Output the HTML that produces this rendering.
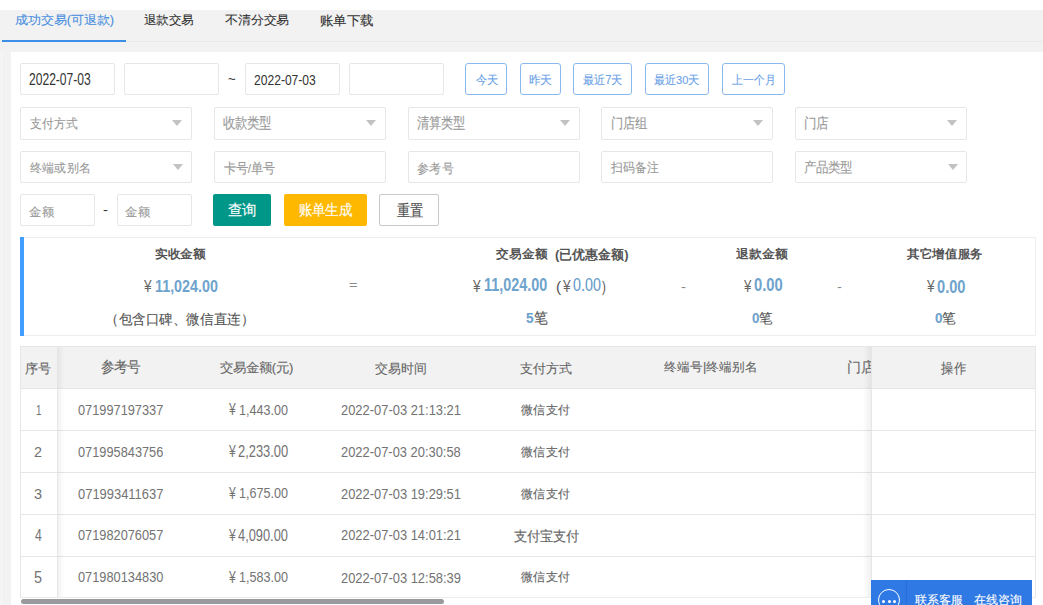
<!DOCTYPE html><html><head><meta charset="utf-8"><style>html,body{margin:0;padding:0;width:1043px;height:605px;overflow:hidden;background:#fff;font-family:"Liberation Sans", sans-serif}.t{position:absolute;white-space:nowrap;transform-origin:0 0;line-height:1;-webkit-text-stroke:0.12px}.b{-webkit-text-stroke:0}</style></head><body>
<div style="position:absolute;left:0px;top:0px;width:1043px;height:10px;background:#fff"></div>
<div style="position:absolute;left:0px;top:10px;width:1043px;height:31px;background:#f2f2f2"></div>
<div style="position:absolute;left:0px;top:41px;width:1043px;height:1px;background:#e8e8e8"></div>
<div style="position:absolute;left:0px;top:42px;width:1043px;height:10px;background:#f2f2f2"></div>
<div style="position:absolute;left:2px;top:40px;width:124px;height:2px;background:#3d8ee6"></div>
<div style="position:absolute;left:0px;top:52px;width:11px;height:553px;background:#f2f2f2"></div>
<div style="position:absolute;left:1px;top:52px;width:1px;height:553px;background:#f8f8f8"></div>
<div style="position:absolute;left:11px;top:52px;width:1032px;height:553px;background:#fff"></div>
<div style="position:absolute;left:20px;top:63px;width:95px;height:32px;box-sizing:border-box;border:1px solid #e6e6e6;border-radius:2px;background:#fff"></div>
<div style="position:absolute;left:124px;top:63px;width:95px;height:32px;box-sizing:border-box;border:1px solid #e6e6e6;border-radius:2px;background:#fff"></div>
<div style="position:absolute;left:245px;top:63px;width:95px;height:32px;box-sizing:border-box;border:1px solid #e6e6e6;border-radius:2px;background:#fff"></div>
<div style="position:absolute;left:349px;top:63px;width:95px;height:32px;box-sizing:border-box;border:1px solid #e6e6e6;border-radius:2px;background:#fff"></div>
<div style="position:absolute;left:465px;top:63px;width:42px;height:32px;box-sizing:border-box;border:1px solid #8ab9ee;border-radius:3px;background:#fff"></div>
<div style="position:absolute;left:520px;top:63px;width:41px;height:32px;box-sizing:border-box;border:1px solid #8ab9ee;border-radius:3px;background:#fff"></div>
<div style="position:absolute;left:573px;top:63px;width:59px;height:32px;box-sizing:border-box;border:1px solid #8ab9ee;border-radius:3px;background:#fff"></div>
<div style="position:absolute;left:645px;top:63px;width:64px;height:32px;box-sizing:border-box;border:1px solid #8ab9ee;border-radius:3px;background:#fff"></div>
<div style="position:absolute;left:722px;top:63px;width:63px;height:32px;box-sizing:border-box;border:1px solid #8ab9ee;border-radius:3px;background:#fff"></div>
<div style="position:absolute;left:20px;top:106.5px;width:172px;height:33px;box-sizing:border-box;border:1px solid #e6e6e6;border-radius:2px;background:#fff"></div>
<div style="position:absolute;left:172px;top:120px;width:0;height:0;border-left:5px solid transparent;border-right:5px solid transparent;border-top:6px solid #c2c2c2"></div>
<div style="position:absolute;left:214px;top:106.5px;width:172px;height:33px;box-sizing:border-box;border:1px solid #e6e6e6;border-radius:2px;background:#fff"></div>
<div style="position:absolute;left:366px;top:120px;width:0;height:0;border-left:5px solid transparent;border-right:5px solid transparent;border-top:6px solid #c2c2c2"></div>
<div style="position:absolute;left:408px;top:106.5px;width:172px;height:33px;box-sizing:border-box;border:1px solid #e6e6e6;border-radius:2px;background:#fff"></div>
<div style="position:absolute;left:560px;top:120px;width:0;height:0;border-left:5px solid transparent;border-right:5px solid transparent;border-top:6px solid #c2c2c2"></div>
<div style="position:absolute;left:601px;top:106.5px;width:172px;height:33px;box-sizing:border-box;border:1px solid #e6e6e6;border-radius:2px;background:#fff"></div>
<div style="position:absolute;left:753px;top:120px;width:0;height:0;border-left:5px solid transparent;border-right:5px solid transparent;border-top:6px solid #c2c2c2"></div>
<div style="position:absolute;left:795px;top:106.5px;width:172px;height:33px;box-sizing:border-box;border:1px solid #e6e6e6;border-radius:2px;background:#fff"></div>
<div style="position:absolute;left:947px;top:120px;width:0;height:0;border-left:5px solid transparent;border-right:5px solid transparent;border-top:6px solid #c2c2c2"></div>
<div style="position:absolute;left:20px;top:151px;width:172px;height:32px;box-sizing:border-box;border:1px solid #e6e6e6;border-radius:2px;background:#fff"></div>
<div style="position:absolute;left:173px;top:164px;width:0;height:0;border-left:5px solid transparent;border-right:5px solid transparent;border-top:6px solid #c2c2c2"></div>
<div style="position:absolute;left:214px;top:151px;width:172px;height:32px;box-sizing:border-box;border:1px solid #e6e6e6;border-radius:2px;background:#fff"></div>
<div style="position:absolute;left:408px;top:151px;width:172px;height:32px;box-sizing:border-box;border:1px solid #e6e6e6;border-radius:2px;background:#fff"></div>
<div style="position:absolute;left:601px;top:151px;width:172px;height:32px;box-sizing:border-box;border:1px solid #e6e6e6;border-radius:2px;background:#fff"></div>
<div style="position:absolute;left:795px;top:151px;width:172px;height:32px;box-sizing:border-box;border:1px solid #e6e6e6;border-radius:2px;background:#fff"></div>
<div style="position:absolute;left:948px;top:164px;width:0;height:0;border-left:5px solid transparent;border-right:5px solid transparent;border-top:6px solid #c2c2c2"></div>
<div style="position:absolute;left:20px;top:194px;width:75px;height:32px;box-sizing:border-box;border:1px solid #e6e6e6;border-radius:2px;background:#fff"></div>
<div style="position:absolute;left:117px;top:194px;width:75px;height:32px;box-sizing:border-box;border:1px solid #e6e6e6;border-radius:2px;background:#fff"></div>
<div style="position:absolute;left:213px;top:194px;width:58px;height:32px;background:#009688;border-radius:2px"></div>
<div style="position:absolute;left:284px;top:194px;width:83px;height:32px;background:#ffb800;border-radius:2px"></div>
<div style="position:absolute;left:379px;top:194px;width:60px;height:32px;box-sizing:border-box;border:1px solid #c9c9c9;border-radius:2px;background:#fff"></div>
<div style="position:absolute;left:20px;top:237px;width:1016px;height:99px;box-sizing:border-box;border:1px solid #eeeeee;background:#fff"></div>
<div style="position:absolute;left:20px;top:237px;width:4px;height:99px;background:#409eff"></div>
<div style="position:absolute;left:20px;top:346px;width:1016px;height:253px;box-sizing:border-box;border:1px solid #e6e6e6;background:#fff"></div>
<div style="position:absolute;left:21px;top:347px;width:1014px;height:42px;background:#f2f2f2"></div>
<div style="position:absolute;left:21px;top:388px;width:1014px;height:1px;background:#e6e6e6"></div>
<div style="position:absolute;left:21px;top:430px;width:1014px;height:1px;background:#e6e6e6"></div>
<div style="position:absolute;left:21px;top:472px;width:1014px;height:1px;background:#e6e6e6"></div>
<div style="position:absolute;left:21px;top:514px;width:1014px;height:1px;background:#e6e6e6"></div>
<div style="position:absolute;left:21px;top:556px;width:1014px;height:1px;background:#e6e6e6"></div>
<div style="position:absolute;left:57px;top:347px;width:1px;height:252px;background:#e6e6e6"></div>
<div style="position:absolute;left:58px;top:347px;width:6px;height:252px;background:linear-gradient(to right,rgba(0,0,0,0.05),rgba(0,0,0,0))"></div>
<div style="position:absolute;left:863px;top:347px;width:8px;height:252px;background:linear-gradient(to left,rgba(0,0,0,0.06),rgba(0,0,0,0))"></div>
<div style="position:absolute;left:871px;top:347px;width:1px;height:252px;background:#e6e6e6"></div>
<div style="position:absolute;left:1035px;top:346px;width:1px;height:253px;background:#e6e6e6"></div>
<div style="position:absolute;left:20px;top:597px;width:1016px;height:8px;background:#fff"></div>
<div style="position:absolute;left:20px;top:597px;width:1016px;height:1px;background:#ececec"></div>
<div style="position:absolute;left:21px;top:598.5px;width:423px;height:5.5px;background:#9a9a9e;border-radius:2.5px"></div>
<div style="position:absolute;left:871px;top:580px;width:161px;height:25px;background:#2f79e4"></div>
<div style="position:absolute;left:906px;top:580px;width:1px;height:25px;background:#296ed8"></div>
<div style="position:absolute;left:878px;top:589px;width:22px;height:22px;box-sizing:border-box;border:1.8px solid #fff;border-radius:50%"></div>
<div style="position:absolute;left:882px;top:599.6px;width:3px;height:3px;background:#fff;border-radius:50%"></div>
<div style="position:absolute;left:887.5px;top:599.6px;width:3px;height:3px;background:#fff;border-radius:50%"></div>
<div style="position:absolute;left:893px;top:599.6px;width:3px;height:3px;background:#fff;border-radius:50%"></div>
<div style="position:absolute;left:0;top:0;width:871px;height:605px;overflow:hidden;pointer-events:none"><div style="position:absolute;left:847px;top:359.2px;font-size:14px;color:#666;white-space:nowrap;line-height:16px;-webkit-text-stroke:0.12px">门店</div></div>
<div class="t" style="left:14.73px;top:13.68px;font-size:13px;color:#4a8fe0;font-weight:normal;transform:scale(0.9929,0.9114)">成功交易(可退款)</div>
<div class="t" style="left:144.33px;top:13.61px;font-size:13px;color:#333;font-weight:normal;transform:scale(0.9588,0.9095)">退款交易</div>
<div class="t" style="left:225.00px;top:13.61px;font-size:13px;color:#333;font-weight:normal;transform:scale(0.9875,0.9095)">不清分交易</div>
<div class="t" style="left:319.84px;top:13.60px;font-size:13px;color:#333;font-weight:normal;transform:scale(1.0223,0.9860)">账单下载</div>
<div class="t b" style="left:29.10px;top:71.39px;font-size:14px;color:#333;font-weight:normal;transform:scale(0.8619,1.1326)">2022-07-03</div>
<div class="t b" style="left:228.14px;top:72.41px;font-size:14px;color:#333;font-weight:normal;transform:scale(0.9306,1.0000)">~</div>
<div class="t b" style="left:253.64px;top:71.91px;font-size:14px;color:#333;font-weight:normal;transform:scale(0.8631,1.1094)">2022-07-03</div>
<div class="t" style="left:475.54px;top:74.26px;font-size:12px;color:#6a9fe6;font-weight:normal;transform:scale(0.9130,0.9784)">今天</div>
<div class="t" style="left:529.18px;top:74.28px;font-size:12px;color:#6a9fe6;font-weight:normal;transform:scale(0.9508,0.9748)">昨天</div>
<div class="t" style="left:583.08px;top:74.21px;font-size:12px;color:#6a9fe6;font-weight:normal;transform:scale(0.9226,0.9873)">最近7天</div>
<div class="t" style="left:654.48px;top:74.45px;font-size:12px;color:#6a9fe6;font-weight:normal;transform:scale(0.9178,0.9812)">最近30天</div>
<div class="t" style="left:732.00px;top:73.67px;font-size:12px;color:#6a9fe6;font-weight:normal;transform:scale(0.9284,1.0338)">上一个月</div>
<div class="t" style="left:30.01px;top:116.62px;font-size:13px;color:#999;font-weight:normal;transform:scale(0.9238,1.0263)">支付方式</div>
<div class="t" style="left:223.40px;top:115.90px;font-size:13px;color:#999;font-weight:normal;transform:scale(0.9296,1.1227)">收款类型</div>
<div class="t" style="left:416.74px;top:116.47px;font-size:13px;color:#999;font-weight:normal;transform:scale(0.9125,1.1198)">清算类型</div>
<div class="t" style="left:610.77px;top:116.33px;font-size:13px;color:#999;font-weight:normal;transform:scale(0.9258,1.0542)">门店组</div>
<div class="t" style="left:803.59px;top:116.56px;font-size:13px;color:#999;font-weight:normal;transform:scale(0.9373,1.0446)">门店</div>
<div class="t" style="left:29.56px;top:161.81px;font-size:13px;color:#999;font-weight:normal;transform:scale(0.9414,0.9475)">终端或别名</div>
<div class="t" style="left:223.66px;top:161.59px;font-size:13px;color:#999;font-weight:normal;transform:scale(0.9089,1.0408)">卡号/单号</div>
<div class="t" style="left:417.25px;top:161.70px;font-size:13px;color:#999;font-weight:normal;transform:scale(0.9484,1.0240)">参考号</div>
<div class="t" style="left:611.32px;top:161.25px;font-size:13px;color:#999;font-weight:normal;transform:scale(0.9179,1.0045)">扫码备注</div>
<div class="t" style="left:804.23px;top:161.41px;font-size:13px;color:#999;font-weight:normal;transform:scale(0.9259,1.0401)">产品类型</div>
<div class="t" style="left:28.72px;top:204.67px;font-size:13px;color:#999;font-weight:normal;transform:scale(0.9799,0.9571)">金额</div>
<div class="t b" style="left:103.18px;top:203.41px;font-size:13px;color:#333;font-weight:normal;transform:scale(1.1363,1.0000)">-</div>
<div class="t" style="left:125.45px;top:204.67px;font-size:13px;color:#999;font-weight:normal;transform:scale(0.9801,0.9571)">金额</div>
<div class="t" style="left:228.37px;top:202.73px;font-size:13px;color:#fff;font-weight:normal;transform:scale(1.0816,1.1258)">查询</div>
<div class="t" style="left:298.73px;top:202.97px;font-size:13px;color:#fff;font-weight:normal;transform:scale(1.0150,1.1313)">账单生成</div>
<div class="t" style="left:396.94px;top:203.23px;font-size:13px;color:#505050;font-weight:normal;transform:scale(0.9875,1.2008)">重置</div>
<div class="t b" style="left:154.54px;top:248.33px;font-size:13px;color:#555;font-weight:bold;transform:scale(0.9644,0.9089)">实收金额</div>
<div class="t b" style="left:144.43px;top:276.97px;font-size:14px;color:#666;font-weight:normal;transform:scale(0.9750,1.2358)">¥</div>
<div class="t b" style="left:154.65px;top:277.77px;font-size:16px;color:#6ea3cc;font-weight:bold;transform:scale(0.8944,1.0598)">11,024.00</div>
<div class="t" style="left:104.62px;top:311.55px;font-size:13px;color:#555;font-weight:normal;transform:scale(1.0441,1.0810)">（包含口碑、微信直连）</div>
<div class="t b" style="left:348.64px;top:278.03px;font-size:13px;color:#888;font-weight:normal;transform:scale(1.1177,1.0000)">=</div>
<div class="t b" style="left:495.90px;top:248.44px;font-size:13px;color:#555;font-weight:bold;transform:scale(0.9896,0.9388)">交易金额</div>
<div class="t b" style="left:555.25px;top:247.72px;font-size:13px;color:#555;font-weight:bold;transform:scale(0.9974,1.0066)">(已优惠金额)</div>
<div class="t b" style="left:473.40px;top:277.69px;font-size:14px;color:#666;font-weight:normal;transform:scale(0.9805,1.1442)">¥</div>
<div class="t b" style="left:483.66px;top:277.28px;font-size:16px;color:#6ea3cc;font-weight:bold;transform:scale(0.8994,1.0892)">11,024.00</div>
<div class="t b" style="left:555.70px;top:279.98px;font-size:13px;color:#555;font-weight:normal;transform:scale(1.1746,1.0673)">(</div>
<div class="t b" style="left:563.41px;top:277.90px;font-size:14px;color:#666;font-weight:normal;transform:scale(0.9821,1.1632)">¥</div>
<div class="t b" style="left:572.81px;top:277.40px;font-size:16px;color:#5e98c6;font-weight:normal;transform:scale(0.8957,1.1082)">0.00</div>
<div class="t b" style="left:601.70px;top:279.98px;font-size:13px;color:#555;font-weight:normal;transform:scale(0.8929,1.0673)">)</div>
<div class="t" style="left:525.82px;top:310.01px;font-size:14px;color:#555;font-weight:normal;transform:scale(0.9737,1.0582)"><span style="color:#6ea3cc;font-weight:bold">5</span>笔</div>
<div class="t b" style="left:681.46px;top:280.41px;font-size:13px;color:#888;font-weight:normal;transform:scale(1.1455,1.0000)">-</div>
<div class="t b" style="left:736.13px;top:248.13px;font-size:13px;color:#555;font-weight:bold;transform:scale(1.0050,0.9358)">退款金额</div>
<div class="t b" style="left:744.42px;top:276.97px;font-size:14px;color:#666;font-weight:normal;transform:scale(0.9489,1.2358)">¥</div>
<div class="t b" style="left:753.57px;top:276.27px;font-size:16px;color:#6ea3cc;font-weight:bold;transform:scale(0.9234,1.1895)">0.00</div>
<div class="t" style="left:751.94px;top:310.80px;font-size:14px;color:#555;font-weight:normal;transform:scale(0.9507,0.9849)"><span style="color:#6ea3cc;font-weight:bold">0</span>笔</div>
<div class="t b" style="left:836.70px;top:280.41px;font-size:13px;color:#888;font-weight:normal;transform:scale(1.1363,1.0000)">-</div>
<div class="t b" style="left:906.55px;top:248.48px;font-size:13px;color:#555;font-weight:bold;transform:scale(0.9763,0.9433)">其它增值服务</div>
<div class="t b" style="left:926.76px;top:276.97px;font-size:14px;color:#666;font-weight:normal;transform:scale(0.9750,1.2358)">¥</div>
<div class="t b" style="left:936.62px;top:276.67px;font-size:16px;color:#6ea3cc;font-weight:bold;transform:scale(0.9145,1.1961)">0.00</div>
<div class="t" style="left:934.68px;top:310.50px;font-size:14px;color:#555;font-weight:normal;transform:scale(0.9600,0.9849)"><span style="color:#6ea3cc;font-weight:bold">0</span>笔</div>
<div class="t" style="left:25.19px;top:361.92px;font-size:13px;color:#666;font-weight:normal;transform:scale(1.0215,1.0110)">序号</div>
<div class="t" style="left:100.78px;top:360.47px;font-size:13px;color:#666;font-weight:normal;transform:scale(1.0072,1.1155)">参考号</div>
<div class="t" style="left:219.89px;top:360.99px;font-size:13px;color:#666;font-weight:normal;transform:scale(0.9970,0.9671)">交易金额(元)</div>
<div class="t" style="left:375.22px;top:361.64px;font-size:13px;color:#666;font-weight:normal;transform:scale(1.0100,1.0212)">交易时间</div>
<div class="t" style="left:520.35px;top:361.98px;font-size:13px;color:#666;font-weight:normal;transform:scale(1.0058,1.0110)">支付方式</div>
<div class="t" style="left:664.00px;top:361.08px;font-size:13px;color:#666;font-weight:normal;transform:scale(0.9994,0.9540)">终端号|终端别名</div>
<div class="t" style="left:940.69px;top:360.70px;font-size:13px;color:#666;font-weight:normal;transform:scale(0.9677,1.0961)">操作</div>
<div class="t b" style="left:36.32px;top:401.80px;font-size:14px;color:#737373;font-weight:normal;transform:scale(0.7026,1.0901)">1</div>
<div class="t b" style="left:77.67px;top:401.91px;font-size:14px;color:#737373;font-weight:normal;transform:scale(0.9129,1.0958)">071997197337</div>
<div class="t b" style="left:228.70px;top:401.11px;font-size:14px;color:#737373;font-weight:normal;transform:scale(0.8645,1.1488)">¥</div>
<div class="t b" style="left:238.82px;top:401.68px;font-size:14px;color:#737373;font-weight:normal;transform:scale(0.8985,1.0599)">1,443.00</div>
<div class="t b" style="left:341.11px;top:401.91px;font-size:14px;color:#737373;font-weight:normal;transform:scale(0.9229,1.0958)">2022-07-03 21:13:21</div>
<div class="t" style="left:521.31px;top:403.01px;font-size:13px;color:#666;font-weight:normal;transform:scale(0.9608,0.9559)">微信支付</div>
<div class="t b" style="left:34.09px;top:443.75px;font-size:14px;color:#737373;font-weight:normal;transform:scale(1.0270,1.1009)">2</div>
<div class="t b" style="left:77.68px;top:444.16px;font-size:14px;color:#737373;font-weight:normal;transform:scale(0.9133,1.0958)">071995843756</div>
<div class="t b" style="left:228.70px;top:442.84px;font-size:14px;color:#737373;font-weight:normal;transform:scale(0.8645,1.1488)">¥</div>
<div class="t b" style="left:237.64px;top:442.99px;font-size:14px;color:#737373;font-weight:normal;transform:scale(0.9216,1.1448)">2,233.00</div>
<div class="t b" style="left:341.11px;top:444.16px;font-size:14px;color:#737373;font-weight:normal;transform:scale(0.9214,1.0958)">2022-07-03 20:30:58</div>
<div class="t" style="left:521.31px;top:444.89px;font-size:13px;color:#666;font-weight:normal;transform:scale(0.9608,0.9559)">微信支付</div>
<div class="t b" style="left:34.05px;top:485.94px;font-size:14px;color:#737373;font-weight:normal;transform:scale(1.0384,1.0958)">3</div>
<div class="t b" style="left:77.96px;top:485.94px;font-size:14px;color:#737373;font-weight:normal;transform:scale(0.9241,1.0958)">071993411637</div>
<div class="t b" style="left:228.70px;top:484.83px;font-size:14px;color:#737373;font-weight:normal;transform:scale(0.8645,1.1488)">¥</div>
<div class="t b" style="left:238.82px;top:485.40px;font-size:14px;color:#737373;font-weight:normal;transform:scale(0.8985,1.0599)">1,675.00</div>
<div class="t b" style="left:341.11px;top:485.94px;font-size:14px;color:#737373;font-weight:normal;transform:scale(0.9229,1.0958)">2022-07-03 19:29:51</div>
<div class="t" style="left:521.31px;top:486.52px;font-size:13px;color:#666;font-weight:normal;transform:scale(0.9608,0.9559)">微信支付</div>
<div class="t b" style="left:34.90px;top:527.52px;font-size:14px;color:#737373;font-weight:normal;transform:scale(0.8736,1.1213)">4</div>
<div class="t b" style="left:77.67px;top:527.48px;font-size:14px;color:#737373;font-weight:normal;transform:scale(0.9129,1.0958)">071982076057</div>
<div class="t b" style="left:228.70px;top:526.71px;font-size:14px;color:#737373;font-weight:normal;transform:scale(0.8645,1.1488)">¥</div>
<div class="t b" style="left:238.41px;top:527.06px;font-size:14px;color:#737373;font-weight:normal;transform:scale(0.9164,1.1448)">4,090.00</div>
<div class="t b" style="left:341.11px;top:527.48px;font-size:14px;color:#737373;font-weight:normal;transform:scale(0.9229,1.0958)">2022-07-03 14:01:21</div>
<div class="t" style="left:514.18px;top:529.04px;font-size:13px;color:#666;font-weight:normal;transform:scale(0.9911,1.0531)">支付宝支付</div>
<div class="t b" style="left:34.12px;top:569.56px;font-size:14px;color:#737373;font-weight:normal;transform:scale(1.0298,1.1162)">5</div>
<div class="t b" style="left:77.78px;top:569.41px;font-size:14px;color:#737373;font-weight:normal;transform:scale(0.9138,1.0958)">071980134830</div>
<div class="t b" style="left:228.70px;top:568.66px;font-size:14px;color:#737373;font-weight:normal;transform:scale(0.8645,1.1488)">¥</div>
<div class="t b" style="left:238.82px;top:569.29px;font-size:14px;color:#737373;font-weight:normal;transform:scale(0.8985,1.0599)">1,583.00</div>
<div class="t b" style="left:341.11px;top:569.52px;font-size:14px;color:#737373;font-weight:normal;transform:scale(0.9229,1.0958)">2022-07-03 12:58:39</div>
<div class="t" style="left:521.31px;top:570.33px;font-size:13px;color:#666;font-weight:normal;transform:scale(0.9608,0.9559)">微信支付</div>
<div class="t" style="left:915.49px;top:593.93px;font-size:12px;color:#fff;font-weight:normal;transform:scale(0.9925,1.0000)">联系客服</div>
<div class="t" style="left:974.47px;top:593.93px;font-size:12px;color:#fff;font-weight:normal;transform:scale(0.9997,1.0000)">在线咨询</div>
</body></html>
